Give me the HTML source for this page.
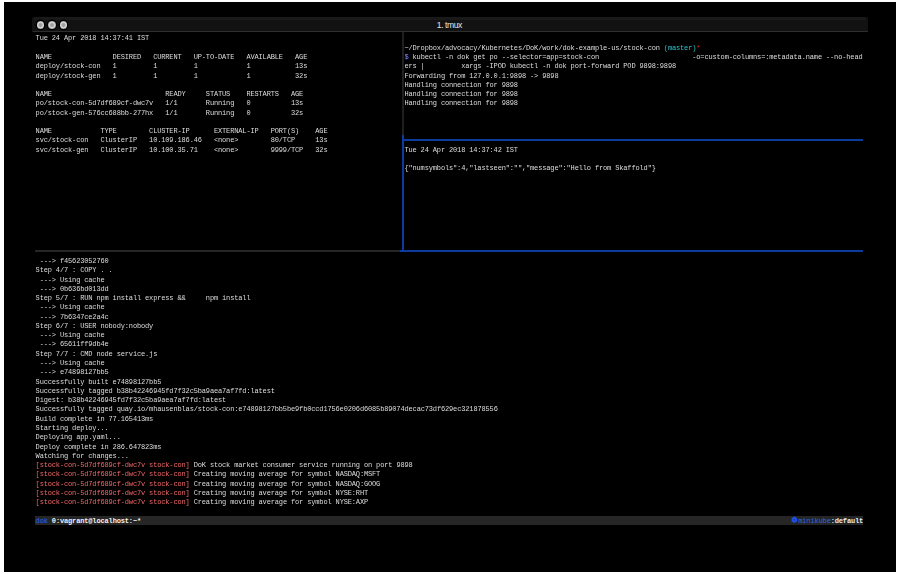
<!DOCTYPE html>
<html><head><meta charset="utf-8"><style>
html,body{margin:0;padding:0;background:#fff;width:900px;height:574px;overflow:hidden;}
#bk{position:absolute;left:4px;top:2px;width:892px;height:570px;background:#000;}
#tb{position:absolute;left:32.3px;top:17.2px;width:835.3px;height:15px;background:#121212;border-radius:2px 2px 0 0;}
#tbtop{position:absolute;left:34px;top:17.4px;width:832px;height:2.4px;background:#191919;}
#tbb{position:absolute;left:32.5px;top:31px;width:835px;height:1px;background:#2e2e2e;}
.dot{position:absolute;top:20.9px;width:7.8px;height:7.8px;border-radius:50%;background:radial-gradient(circle,#999 0,#a4a4a4 1.5px,#cfcfcf 2.4px,#d2d2d2 3.2px,#8a8a8a 3.9px);box-shadow:0 0 0 1.4px #000;}
#title{position:absolute;left:436.8px;top:20.6px;font:8.6px/9px "Liberation Sans",sans-serif;letter-spacing:-0.45px;color:#e4e4e4;white-space:pre;}
.t{position:absolute;font-family:"Liberation Mono",monospace;font-size:7.0px;line-height:9.275px;letter-spacing:-0.1470px;color:#dedede;white-space:pre;}
.cy{color:#2ac8ca} .rd{color:#e02a2a} .pu{color:#8585ff} .rr{color:#f06868}
.ln{position:absolute;}
#st{position:absolute;left:35px;top:515.6px;width:828.3px;height:9.1px;background:#262626;}
</style></head><body>
<div id="bk"></div>
<div id="tb"></div><div id="tbtop"></div><div id="tbb"></div>
<div class="dot" style="left:36.7px"></div>
<div class="dot" style="left:48.3px"></div>
<div class="dot" style="left:59.7px"></div>
<div id="title">1. tmux</div>
<div class="ln" style="left:401.85px;top:32px;width:1.9px;height:102.7px;background:#1f1f1f"></div>
<div class="ln" style="left:401.85px;top:134.7px;width:1.9px;height:117.3px;background:#0b3b9e"></div>
<div class="ln" style="left:401.85px;top:138.75px;width:461.4px;height:1.9px;background:#0b3b9e"></div>
<div class="ln" style="left:400.4px;top:250.05px;width:462.9px;height:1.9px;background:#0b3b9e"></div>
<div class="ln" style="left:35.2px;top:250.05px;width:365.2px;height:1.9px;background:#262626"></div>
<div id="st"></div>
<div id="txt" style="position:absolute;left:0;top:0;width:900px;height:574px;filter:blur(0.3px)">
<div class="t" style="top:34.40px;left:35.60px">Tue 24 Apr 2018 14:37:41 IST</div>
<div class="t" style="top:52.95px;left:35.60px">NAME               DESIRED   CURRENT   UP-TO-DATE   AVAILABLE   AGE</div>
<div class="t" style="top:62.22px;left:35.60px">deploy/stock-con   1         1         1            1           13s</div>
<div class="t" style="top:71.50px;left:35.60px">deploy/stock-gen   1         1         1            1           32s</div>
<div class="t" style="top:90.05px;left:35.60px">NAME                            READY     STATUS    RESTARTS   AGE</div>
<div class="t" style="top:99.32px;left:35.60px">po/stock-con-5d7df689cf-dwc7v   1/1       Running   0          13s</div>
<div class="t" style="top:108.60px;left:35.60px">po/stock-gen-576cc688bb-277hx   1/1       Running   0          32s</div>
<div class="t" style="top:127.15px;left:35.60px">NAME            TYPE        CLUSTER-IP      EXTERNAL-IP   PORT(S)    AGE</div>
<div class="t" style="top:136.42px;left:35.60px">svc/stock-con   ClusterIP   10.109.186.46   &lt;none&gt;        80/TCP     13s</div>
<div class="t" style="top:145.70px;left:35.60px">svc/stock-gen   ClusterIP   10.100.35.71    &lt;none&gt;        9999/TCP   32s</div>
<div class="t" style="top:43.67px;left:404.42px">~/Dropbox/advocacy/Kubernetes/DoK/work/dok-example-us/stock-con <span class="cy">(master)</span><span class="rd">*</span></div>
<div class="t" style="top:52.95px;left:404.42px"><span class="pu">$</span> kubectl -n dok get po --selector=app=stock-con                       -o=custom-columns=:metadata.name --no-head</div>
<div class="t" style="top:62.22px;left:404.42px">ers |         xargs -IPOD kubectl -n dok port-forward POD 9898:9898</div>
<div class="t" style="top:71.50px;left:404.42px">Forwarding from 127.0.0.1:9898 -&gt; 9898</div>
<div class="t" style="top:80.77px;left:404.42px">Handling connection for 9898</div>
<div class="t" style="top:90.05px;left:404.42px">Handling connection for 9898</div>
<div class="t" style="top:99.32px;left:404.42px">Handling connection for 9898</div>
<div class="t" style="top:145.70px;left:404.42px">Tue 24 Apr 2018 14:37:42 IST</div>
<div class="t" style="top:164.25px;left:404.42px">{"numsymbols":4,"lastseen":"","message":"Hello from Skaffold"}</div>
<div class="t" style="top:257.00px;left:35.60px"> ---&gt; f45623052760</div>
<div class="t" style="top:266.27px;left:35.60px">Step 4/7 : COPY . .</div>
<div class="t" style="top:275.55px;left:35.60px"> ---&gt; Using cache</div>
<div class="t" style="top:284.82px;left:35.60px"> ---&gt; 0b636bd013dd</div>
<div class="t" style="top:294.10px;left:35.60px">Step 5/7 : RUN npm install express &amp;&amp;     npm install</div>
<div class="t" style="top:303.37px;left:35.60px"> ---&gt; Using cache</div>
<div class="t" style="top:312.65px;left:35.60px"> ---&gt; 7b6347ce2a4c</div>
<div class="t" style="top:321.92px;left:35.60px">Step 6/7 : USER nobody:nobody</div>
<div class="t" style="top:331.20px;left:35.60px"> ---&gt; Using cache</div>
<div class="t" style="top:340.47px;left:35.60px"> ---&gt; 65611ff9db4e</div>
<div class="t" style="top:349.75px;left:35.60px">Step 7/7 : CMD node service.js</div>
<div class="t" style="top:359.02px;left:35.60px"> ---&gt; Using cache</div>
<div class="t" style="top:368.30px;left:35.60px"> ---&gt; e74898127bb5</div>
<div class="t" style="top:377.57px;left:35.60px">Successfully built e74898127bb5</div>
<div class="t" style="top:386.85px;left:35.60px">Successfully tagged b38b42246945fd7f32c5ba9aea7af7fd:latest</div>
<div class="t" style="top:396.12px;left:35.60px">Digest: b38b42246945fd7f32c5ba9aea7af7fd:latest</div>
<div class="t" style="top:405.40px;left:35.60px">Successfully tagged quay.io/mhausenblas/stock-con:e74898127bb5be9fb0ccd1756e0206d6085b89074decac73df629ec321878556</div>
<div class="t" style="top:414.67px;left:35.60px">Build complete in 77.165413ms</div>
<div class="t" style="top:423.95px;left:35.60px">Starting deploy...</div>
<div class="t" style="top:433.22px;left:35.60px">Deploying app.yaml...</div>
<div class="t" style="top:442.50px;left:35.60px">Deploy complete in 286.647823ms</div>
<div class="t" style="top:451.77px;left:35.60px">Watching for changes...</div>
<div class="t" style="top:461.05px;left:35.60px"><span class="rr">[stock-con-5d7df689cf-dwc7v stock-con]</span> DoK stock market consumer service running on port 9898</div>
<div class="t" style="top:470.32px;left:35.60px"><span class="rr">[stock-con-5d7df689cf-dwc7v stock-con]</span> Creating moving average for symbol NASDAQ:MSFT</div>
<div class="t" style="top:479.60px;left:35.60px"><span class="rr">[stock-con-5d7df689cf-dwc7v stock-con]</span> Creating moving average for symbol NASDAQ:GOOG</div>
<div class="t" style="top:488.87px;left:35.60px"><span class="rr">[stock-con-5d7df689cf-dwc7v stock-con]</span> Creating moving average for symbol NYSE:RHT</div>
<div class="t" style="top:498.15px;left:35.60px"><span class="rr">[stock-con-5d7df689cf-dwc7v stock-con]</span> Creating moving average for symbol NYSE:AXP</div>
</div>
<div class="t" style="top:516.70px;left:35.60px"><span style="color:#2a66e6">dok</span> <b style="color:#f2f2f2">0:vagrant@localhost:~*</b></div>
<svg style="position:absolute;left:790.5px;top:516px" width="7" height="8" viewBox="0 0 7 8"><polygon points="3.3,0.6 6.0,2.2 6.0,5.5 3.3,7.1 0.6,5.5 0.6,2.2" fill="#1f50e8"/><circle cx="3.3" cy="3.85" r="1" fill="#1a3fb0"/></svg>
<div class="t" style="top:516.70px;left:798.26px"><span style="color:#2a66e6">minikube</span><b style="color:#ececec">:default</b></div>
</body></html>
